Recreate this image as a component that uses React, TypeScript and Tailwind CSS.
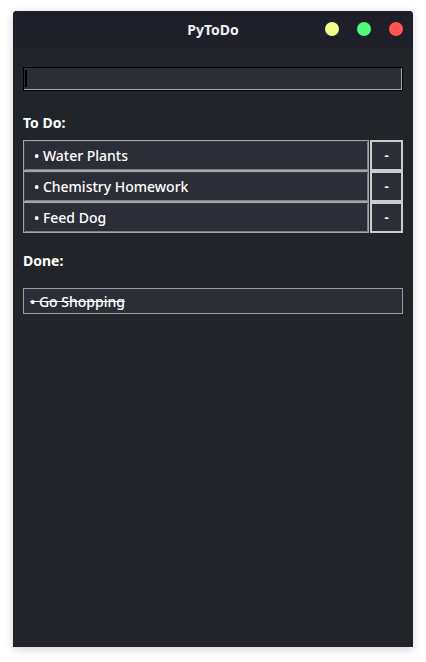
const todo = ['Water Plants', 'Chemistry Homework', 'Feed Dog']
const done = ['Go Shopping']

function TodoRow({ text }: { text: string }) {
  return (
    <div className="flex h-[31px]">
      <div className="flex flex-1 items-center border border-[#a3a5a9] bg-[#2b2e37] pl-[10px] text-[14px] font-medium text-white shadow-[inset_1px_1px_0_#3a3d45,inset_-1px_-1px_0_#7c7f85]">
        • {text}
      </div>
      <button className="ml-[1px] flex w-[33px] items-center justify-center border-2 border-[#cbcccd] bg-[#2b2e37] text-[13px] font-bold text-white">
        -
      </button>
    </div>
  )
}

export default function App() {
  return (
    <div className="h-[662px] w-[426px] bg-white pt-[11px] pl-[13px] [font-family:'Noto_Sans','DejaVu_Sans',sans-serif]">
      <div className="flex h-[636px] w-[400px] flex-col overflow-hidden rounded-t-[4px] bg-[#212529] shadow-[0_2px_10px_rgba(0,0,0,0.18)]">
        {/* Title bar */}
        <div className="relative flex h-[36px] items-center justify-center bg-[#1e1f29]">
          <p className="text-[14px] font-bold text-[#eef0f3]">PyToDo</p>
          <div className="absolute right-[10px] top-[11px] flex gap-[18px]">
            <span className="h-[14px] w-[14px] rounded-full bg-[#f1fa8c]" />
            <span className="h-[14px] w-[14px] rounded-full bg-[#50fa7b]" />
            <span className="h-[14px] w-[14px] rounded-full bg-[#ff5555]" />
          </div>
        </div>

        <div className="flex flex-col px-[10px]">
          {/* Entry */}
          <div className="mt-[20px] h-[24px] border border-black bg-[#2b2e37]">
            <div className="flex h-full items-stretch border-r border-b border-r-[#a4a6aa] border-b-[#a4a6aa] py-[2px] pl-[1px]">
              <span className="w-[2px] bg-black" />
            </div>
          </div>

          <p className="mt-[22px] text-[14px] font-bold leading-[20px] text-white">To Do:</p>
          <div className="mt-[7px] flex flex-col">
            {todo.map((t) => (
              <TodoRow key={t} text={t} />
            ))}
          </div>

          <p className="mt-[18px] text-[14px] font-bold leading-[20px] text-white">Done:</p>
          <div className="mt-[17px] flex h-[26px] items-center border border-[#9a9ca1] bg-[#2b2e37] pl-[6px] text-[14px] font-medium text-white">
            {done.map((t) => (
              <span key={t} className="line-through">• {t}</span>
            ))}
          </div>
        </div>
      </div>
    </div>
  )
}
